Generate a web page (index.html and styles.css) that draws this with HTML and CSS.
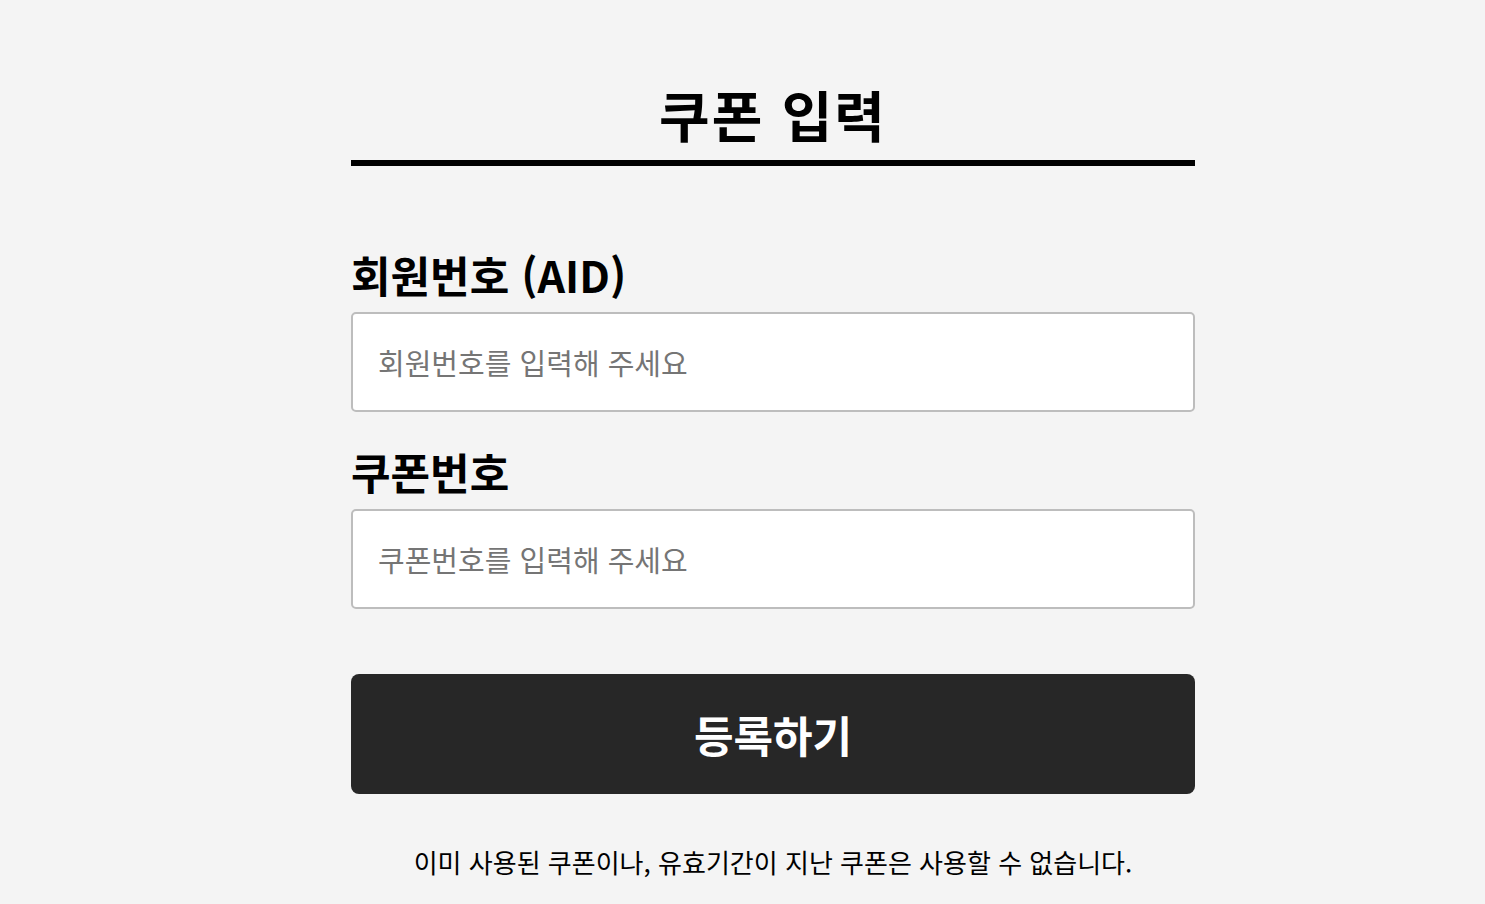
FILE: index.html
```html
<!DOCTYPE html>
<html lang="ko">
<head>
<meta charset="utf-8">
<title>쿠폰 입력</title>
<link rel="stylesheet" href="styles.css">
</head>
<body>
<main class="page">
  <h1 class="title">쿠폰 입력</h1>
  <form class="form">
    <label class="field">
      <span class="label">회원번호 (AID)</span>
      <input class="input" type="text" placeholder="회원번호를 입력해 주세요">
    </label>
    <label class="field">
      <span class="label">쿠폰번호</span>
      <input class="input" type="text" placeholder="쿠폰번호를 입력해 주세요">
    </label>
    <button class="submit" type="button">등록하기</button>
    <p class="notice">이미 사용된 쿠폰이나, 유효기간이 지난 쿠폰은 사용할 수 없습니다.</p>
  </form>
</main>
</body>
</html>
```
FILE: styles.css
```css
* { box-sizing: border-box; }
html, body { margin: 0; padding: 0; }
body {
  background: #f4f4f4;
  font-family: "Noto Sans CJK KR", "Noto Sans", sans-serif;
  color: #000;
  padding-left: 61px;
}
.page {
  width: 844px;
  margin: 0 auto;
  padding-top: 78px;
}
.title {
  margin: 0;
  font-size: 55px;
  font-weight: 700;
  text-align: center;
  line-height: 70px;
  letter-spacing: 2px;
  border-bottom: 6px solid #000;
  padding-bottom: 12px;
}
.form {
  display: flex;
  flex-direction: column;
  padding-top: 90px;
}
.field {
  display: flex;
  flex-direction: column;
  margin-bottom: 41px;
}
.label {
  font-size: 43px;
  font-weight: 700;
  line-height: 56px;
  margin-bottom: 10px;
  margin-top: -10px;
}
.input {
  height: 100px;
  border: 2px solid #bdbdbd;
  border-radius: 5px;
  background: #fff;
  padding: 0 25px;
  font-family: inherit;
  font-size: 29px;
  color: #000;
  outline: none;
}
.input::placeholder { color: #757575; }
.submit {
  margin-top: 24px;
  height: 120px;
  border: none;
  border-radius: 8px;
  background: #272727;
  color: #fff;
  font-family: inherit;
  font-size: 43px;
  font-weight: 700;
  cursor: pointer;
}
.notice {
  margin: 50px 0 0;
  text-align: center;
  font-size: 26px;
  line-height: 36px;
}
```
